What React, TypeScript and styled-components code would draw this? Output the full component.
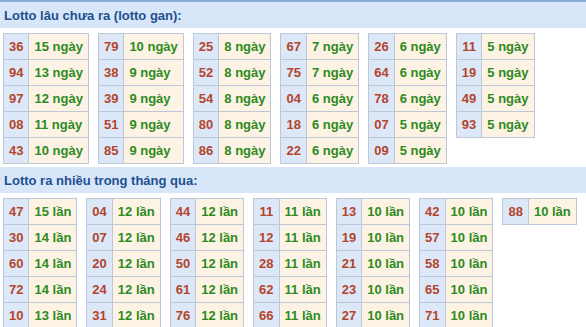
import React from "react";
import styled, { createGlobalStyle } from "styled-components";

const Global = createGlobalStyle`
  html, body { margin: 0; padding: 0; background: #ffffff; overflow: hidden; }
  body { font-family: "Liberation Sans", Arial, sans-serif; }
`;

const Page = styled.div`
  width: 586px;
  border-top: 2px solid #86abd9;
  box-sizing: border-box;
`;

const Section = styled.section`
  display: flex;
  flex-direction: column;
  gap: 5px;
  margin-bottom: 3px;
`;

const HeaderBar = styled.div`
  height: 26px;
  background: #d7e7f9;
  display: flex;
  align-items: center;
  padding-left: 4px;
  color: #1e4f90;
  font-size: 13px;
  font-weight: bold;
`;

const TableRow = styled.div`
  display: flex;
  align-items: flex-start;
  gap: 9px;
  padding-left: 3px;
`;

const Table = styled.table`
  border-collapse: collapse;
  font-size: 13px;
  font-weight: bold;
`;

const Cell = styled.td<{ $kind: "num" | "val" }>`
  height: 25px;
  padding: 0 5px;
  border: 1px solid #bcc8d8;
  white-space: nowrap;
  text-align: ${(p) => (p.$kind === "num" ? "center" : "left")};
  background: ${(p) => (p.$kind === "num" ? "#dce8f8" : "#fdf3e4")};
  color: ${(p) => (p.$kind === "num" ? "#b4442c" : "#2d8a1f")};
`;

type Item = [string, number];

const gan: Item[][] = [
  [["36", 15], ["94", 13], ["97", 12], ["08", 11], ["43", 10]],
  [["79", 10], ["38", 9], ["39", 9], ["51", 9], ["85", 9]],
  [["25", 8], ["52", 8], ["54", 8], ["80", 8], ["86", 8]],
  [["67", 7], ["75", 7], ["04", 6], ["18", 6], ["22", 6]],
  [["26", 6], ["64", 6], ["78", 6], ["07", 5], ["09", 5]],
  [["11", 5], ["19", 5], ["49", 5], ["93", 5]],
];

const nhieu: Item[][] = [
  [["47", 15], ["30", 14], ["60", 14], ["72", 14], ["10", 13]],
  [["04", 12], ["07", 12], ["20", 12], ["24", 12], ["31", 12]],
  [["44", 12], ["46", 12], ["50", 12], ["61", 12], ["76", 12]],
  [["11", 11], ["12", 11], ["28", 11], ["62", 11], ["66", 11]],
  [["13", 10], ["19", 10], ["21", 10], ["23", 10], ["27", 10]],
  [["42", 10], ["57", 10], ["58", 10], ["65", 10], ["71", 10]],
  [["88", 10]],
];

function Block({ title, groups, unit }: { title: string; groups: Item[][]; unit: string }) {
  return (
    <Section>
      <HeaderBar>{title}</HeaderBar>
      <TableRow>
        {groups.map((g, i) => (
          <Table key={i}>
            <tbody>
              {g.map(([n, c]) => (
                <tr key={n}>
                  <Cell $kind="num">{n}</Cell>
                  <Cell $kind="val">
                    {c} {unit}
                  </Cell>
                </tr>
              ))}
            </tbody>
          </Table>
        ))}
      </TableRow>
    </Section>
  );
}

export default function App() {
  return (
    <>
      <Global />
      <Page>
        <Block title="Lotto lâu chưa ra (lotto gan):" groups={gan} unit="ngày" />
        <Block title="Lotto ra nhiều trong tháng qua:" groups={nhieu} unit="lần" />
      </Page>
    </>
  );
}
